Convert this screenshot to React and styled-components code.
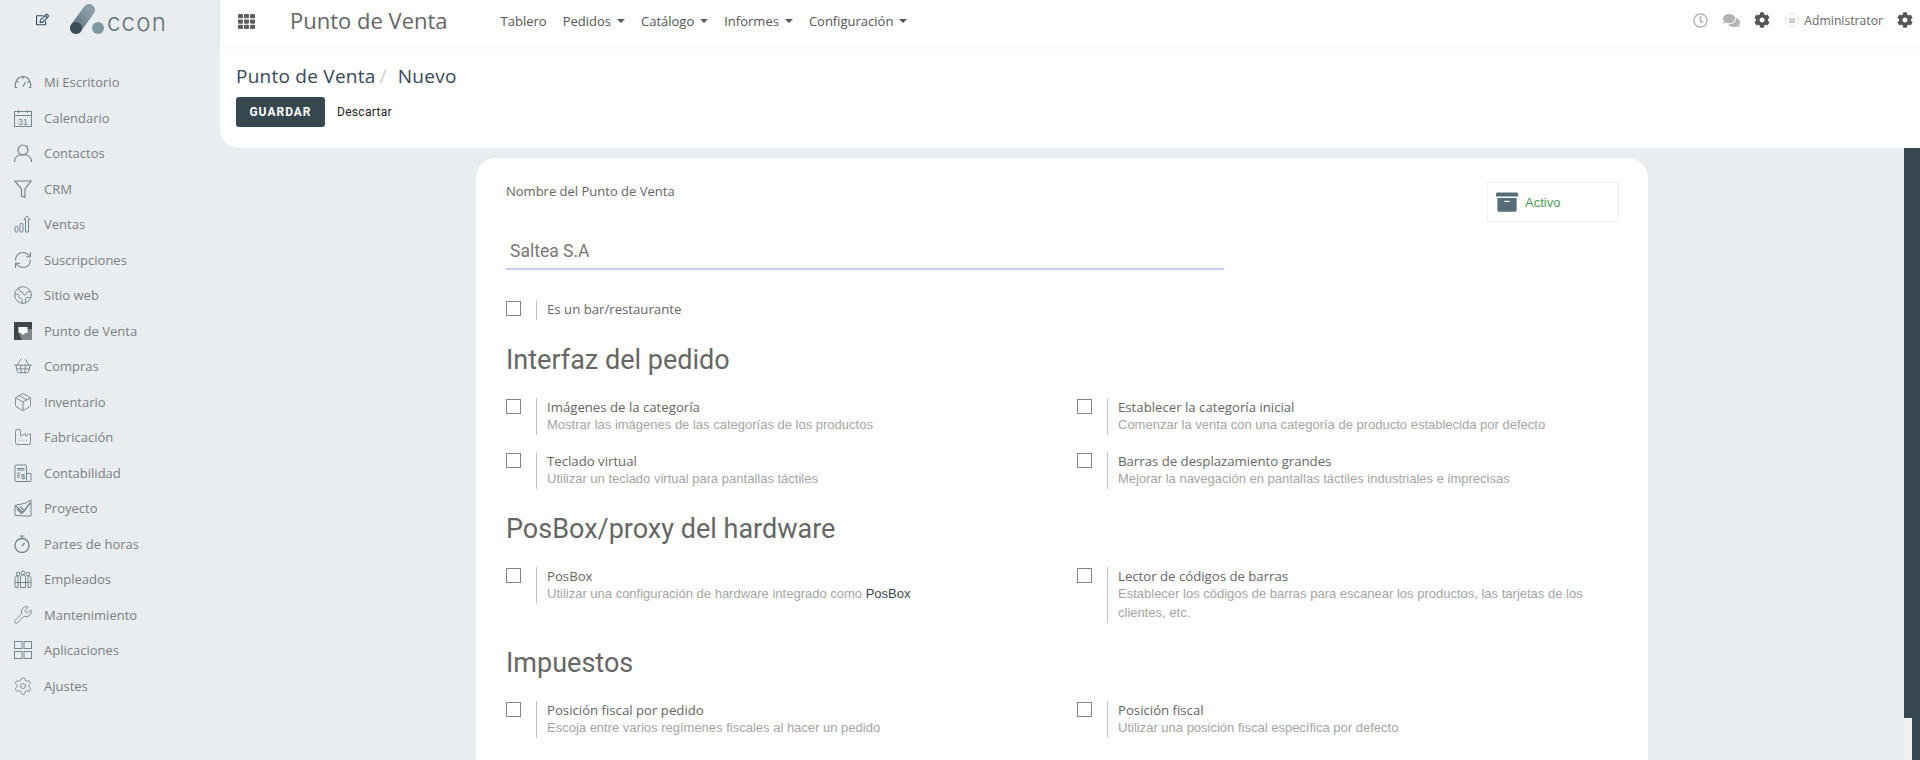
import React from "react";
import styled, { createGlobalStyle } from "styled-components";
import { FaArchive, FaCog, FaComments, FaRegClock, FaRegEdit, FaTh } from "react-icons/fa";
import { Earth, Factory, Package, RefreshCw, Settings, ShoppingBasket, Wrench } from "lucide-react";

const GlobalStyle = createGlobalStyle`
    html, body {
        margin: 0;
        padding: 0;
        height: 760px;
        overflow: hidden;
        background: #e9edf0;
        font-family: "Open Sans", "Liberation Sans", sans-serif;
    }
    * {
        box-sizing: border-box;
    }
`;

const Page = styled.div`
    display: flex;
    width: 1920px;
    height: 760px;
`;

const Sidebar = styled.aside`
    flex: 0 0 220px;
    background: #e9edf0;
`;

const Brand = styled.div`
    display: flex;
    height: 64.6px;
    padding: 13px 0 0 36px;
    color: #2f4a63;
`;

const LogoMark = styled.div`
    display: flex;
    align-items: flex-end;
    height: 36px;
    margin: -13px 0 0 19px;
`;

const LogoText = styled.span`
    margin-left: 1px;
    font-family: "Inter", "Open Sans", sans-serif;
    font-size: 24px;
    font-weight: 300;
    line-height: 26px;
    letter-spacing: 1.2px;
    color: #5f7079;
`;

const MenuList = styled.nav`
    display: flex;
    flex-direction: column;
`;

const MenuItem = styled.a`
    display: flex;
    align-items: center;
    height: 35.5px;
    padding-left: 14px;
    font-size: 13px;
    color: #7b7f82;
`;

const MenuIcon = styled.span`
    display: flex;
    flex: 0 0 30px;
    color: #748690;

    .lucide {
        margin: -1px 0 -1px -1px;
    }
`;

const Main = styled.div`
    display: flex;
    flex: 1;
    flex-direction: column;
    min-width: 0;
`;

const Header = styled.header`
    display: flex;
    flex: 0 0 46px;
    align-items: center;
    padding: 0 7px 4px 18px;
    background: #fff;
    box-shadow: 0 1px 6px rgba(0, 0, 0, .05);
    position: relative;
    z-index: 1;
`;

const AppTitle = styled.div`
    margin: -2px 53px 0 35px;
    font-size: 22px;
    color: #666;
`;

const TopNav = styled.nav`
    display: flex;
    gap: 16px;
`;

const TopLink = styled.a`
    display: flex;
    align-items: center;
    font-size: 13px;
    color: #555;

    ${p => p.$caret && `
        &:after {
            content: "";
            margin-left: 6px;
            border-top: 4px solid #555;
            border-left: 4px solid transparent;
            border-right: 4px solid transparent;
        }
    `}
`;

const TopRight = styled.div`
    display: flex;
    align-items: center;
    margin: -2px 0 0 auto;
`;

const TopIcon = styled.span`
    display: flex;
    margin-left: ${p => p.$gap || 0}px;
    color: ${p => p.color || "#555"};
`;

const Avatar = styled.span`
    display: flex;
    align-items: center;
    justify-content: center;
    width: 14px;
    height: 14px;
    margin: 0 5px 0 15px;
    border: 1px solid #e4e4e4;
    border-radius: 50%;

    &:after {
        content: "";
        width: 6px;
        height: 5px;
        background: #d0d0d0;
    }
`;

const UserName = styled.span`
    font-size: 12.2px;
    color: #666;
`;

const ControlPanel = styled.div`
    flex: 0 0 102px;
    padding: 18px 16px 0;
    background: #fff;
    border-bottom-left-radius: 20px;
`;

const Breadcrumb = styled.div`
    display: flex;
    height: 24px;
    align-items: center;
    font-family: "Open Sans", sans-serif;
    font-size: 19px;
    letter-spacing: .25px;
    color: #37475a;
`;

const Slash = styled.span`
    margin: 0 11px 0 4px;
    color: #ccc;
`;

const Actions = styled.div`
    display: flex;
    align-items: center;
    margin-top: 9px;
`;

const SaveButton = styled.button`
    width: 89px;
    height: 30px;
    padding: 0;
    border: 0;
    border-radius: 3px;
    background: #37474f;
    font-family: "Roboto", sans-serif;
    font-size: 12px;
    font-weight: 700;
    letter-spacing: 1px;
    color: #fff;
`;

const DiscardLink = styled.a`
    margin-left: 12px;
    font-family: "Roboto", sans-serif;
    font-size: 12px;
    letter-spacing: .3px;
    color: #222;
`;

const Body = styled.div`
    display: flex;
    flex: 1;
    min-height: 0;
`;

const Scroller = styled.div`
    flex: 1;
    min-width: 0;
    overflow: hidden;
`;

const Strip = styled.div`
    display: flex;
    flex: 0 0 16px;
    flex-direction: column;
    justify-content: flex-end;
    background: #37474f;
`;

const StripThumb = styled.div`
    width: 8px;
    height: 42px;
    background: #f1f1f1;
`;

const Card = styled.div`
    width: 1172px;
    margin: 10px auto 0;
    padding: 24px 29px 60px 30px;
    background: #fff;
    border-radius: 20px 20px 0 0;
    box-shadow: 0 0 14px rgba(0, 0, 0, .012);
`;

const FormHead = styled.div`
    display: flex;
    justify-content: space-between;
`;

const TitleBlock = styled.div`
    width: 718px;
`;

const FieldLabel = styled.label`
    display: block;
    font-size: 13px;
    line-height: 18px;
    color: #666;
`;

const NameInput = styled.div`
    height: 34px;
    margin-top: 36px;
    padding: 0 4px;
    border-bottom: 2px solid #c5d0ef;
    font-family: "Roboto", sans-serif;
    font-size: 17.5px;
    line-height: 30px;
    color: #777;
`;

const StatButton = styled.div`
    display: flex;
    align-items: center;
    width: 132px;
    height: 40px;
    padding-left: 8px;
    border: 1px solid #eef0f6;
    font-family: "Liberation Sans", sans-serif;
    font-size: 13px;
    color: #4f9a55;
`;

const StatIcon = styled.span`
    display: flex;
    margin-right: 7px;
    color: #566e7a;
`;

const Option = styled.div`
    display: flex;
    align-items: flex-start;
    margin-top: ${p => p.$top || 0}px;
`;

const CheckBox = styled.span`
    flex: 0 0 15px;
    height: 15px;
    margin-top: 1px;
    border: 1px solid #858585;
`;

const OptionText = styled.div`
    margin-left: 15px;
    padding: 0 0 1px 10px;
    min-height: ${p => p.$short ? 20 : 37}px;
    border-left: 1px solid #c4c4c4;
`;

const OptionLabel = styled.div`
    font-size: 13.2px;
    line-height: 18px;
    color: #666;
`;

const OptionHelp = styled.div`
    margin-top: -1px;
    font-family: "Liberation Sans", sans-serif;
    font-size: 13px;
    line-height: 19px;
    color: #a5a5a5;
`;

const HelpLink = styled.span`
    color: #37474f;
`;

const Heading = styled.h2`
    margin: 22px 0 20px;
    font-family: "Roboto", sans-serif;
    font-size: 27px;
    font-weight: 400;
    line-height: 36px;
    color: #666;
`;

const OptionGrid = styled.div`
    display: grid;
    grid-template-columns: 571px 519px;
    row-gap: 17px;
`;

const Icon = ({ children }) => (
    <svg width="18" height="18" viewBox="0 0 18 18" fill="none" stroke="currentColor" strokeWidth="1">
        {children}
    </svg>
);

const GaugeIcon = () => (
    <Icon>
        <path d="M1.5 14.5C.2 8 4.5 3.500 9 3.500s8.800 4.500 7.500 11" strokeWidth="1.200" />
        <path d="M.8 14.500h2.500M14.700 14.500h2.500M3 8.500l1.500 1M15 8.500l-1.500 1M9 4v2M9 13.500l2.500-4.500" strokeWidth="1.200" />
    </Icon>
);

const CalendarIcon = () => (
    <Icon>
        <rect x=".5" y="2.500" width="17" height="15" />
        <path d="M.5 6.500h17M4.500 1v3M13.500 1v3" />
        <text x="9" y="15.800" textAnchor="middle" fontSize="9" fontFamily="Liberation Sans" fill="currentColor" stroke="none">31</text>
    </Icon>
);

const UserIcon = () => (
    <Icon>
        <circle cx="9" cy="6" r="5" strokeWidth="1.200" />
        <path d="M.5 18c0-5 3.500-7.500 8.500-7.500s8.500 2.500 8.500 7.500" strokeWidth="1.200" />
    </Icon>
);

const FunnelIcon = () => (
    <Icon>
        <path d="M.8 1h16.400l-6.200 8v8.500l-3.500-1.500V9z" strokeWidth="1.200" />
    </Icon>
);

const BarsIcon = () => (
    <Icon>
        <rect x="1" y="11.500" width="3" height="5.500" rx=".8" />
        <rect x="6" y="8.500" width="3" height="8.500" rx=".8" />
        <path d="M11.500 17V4.500H10L13 1l3 3.500h-1.500V17z" />
    </Icon>
);

const PosIcon = () => (
    <svg width="18" height="18" viewBox="0 0 18 18">
        <rect width="18" height="18" fill="#3f4649" />
        <path d="M18 18H8l-3-6 9-5h4z" fill="#7e8487" />
        <rect x="4.500" y="5" width="9" height="6" fill="#fff" />
        <rect x="7.500" y="11" width="3" height="1.500" fill="#fff" />
    </svg>
);

const LedgerIcon = () => (
    <Icon>
        <path d="M12.500 16.500V2a1 1 0 0 0-1-1H2a1 1 0 0 0-1 1v14.500a1 1 0 0 0 1 1h14a1 1 0 0 0 1-1V9.500h-4.500" />
        <path d="M3 4.500h7.500M3 6h7.500M3 9h3M3 11h3M3 13h3" />
        <text x="9" y="14.500" textAnchor="middle" fontSize="7.500" fontWeight="700" fontFamily="Liberation Sans" fill="currentColor" stroke="none">$</text>
    </Icon>
);

const ProjectIcon = () => (
    <Icon>
        <path d="M1 6.500v10l12 .5h4V1l-5 3z" />
        <path d="M1 6.500l8 7 7.500-10M3 10l5 5M6 8l4 3" strokeWidth="1.300" />
    </Icon>
);

const TimerIcon = () => (
    <Icon>
        <circle cx="8" cy="10.500" r="7" strokeWidth="1.400" />
        <path d="M5.500 1h5M8 1v2.500M8 11l2.500-3" strokeWidth="1.200" />
    </Icon>
);

const StaffIcon = () => (
    <Icon>
        <circle cx="4" cy="4" r="1.800" />
        <circle cx="9" cy="2.800" r="1.800" />
        <circle cx="14" cy="4" r="1.800" />
        <path d="M1 8.500c0-2 1-2.500 3-2.500v11.500H2a1 1 0 0 1-1-1zM6.500 17.500V7c0-1.500 1-2 2.500-2s2.500.5 2.500 2v10.500zM17 8.500c0-2-1-2.500-3-2.500v11.500h2a1 1 0 0 0 1-1zM1 12.500h16" />
    </Icon>
);

const AppsIcon = () => (
    <Icon>
        <rect x=".5" y=".5" width="7.500" height="7" />
        <rect x="10" y=".5" width="7.500" height="7" />
        <rect x=".5" y="10.500" width="7.500" height="7" />
        <rect x="10" y="10.500" width="7.500" height="7" />
    </Icon>
);

const line = { size: 20, strokeWidth: 1.1 };

const menu = [
    ["Mi Escritorio", <GaugeIcon />],
    ["Calendario", <CalendarIcon />],
    ["Contactos", <UserIcon />],
    ["CRM", <FunnelIcon />],
    ["Ventas", <BarsIcon />],
    ["Suscripciones", <RefreshCw {...line} strokeWidth={1.3} />],
    ["Sitio web", <Earth {...line} />],
    ["Punto de Venta", <PosIcon />],
    ["Compras", <ShoppingBasket {...line} />],
    ["Inventario", <Package {...line} />],
    ["Fabricación", <Factory {...line} />],
    ["Contabilidad", <LedgerIcon />],
    ["Proyecto", <ProjectIcon />],
    ["Partes de horas", <TimerIcon />],
    ["Empleados", <StaffIcon />],
    ["Mantenimiento", <Wrench {...line} />],
    ["Aplicaciones", <AppsIcon />],
    ["Ajustes", <Settings {...line} />],
];

const topLinks = [
    ["Tablero", false],
    ["Pedidos", true],
    ["Catálogo", true],
    ["Informes", true],
    ["Configuración", true],
];

const Setting = ({ label, help, top }) => (
    <Option $top={top}>
        <CheckBox />
        <OptionText $short={!help}>
            <OptionLabel>{label}</OptionLabel>
            {help && <OptionHelp>{help}</OptionHelp>}
        </OptionText>
    </Option>
);

const Logo = () => (
    <LogoMark>
        <svg width="38" height="36" viewBox="0 0 38 36">
            <defs>
                <linearGradient id="pill" x1="0" y1="1" x2="1" y2="0">
                    <stop offset="0" stopColor="#5e7480" />
                    <stop offset="1" stopColor="#8ba0ab" />
                </linearGradient>
            </defs>
            <line x1="8" y1="28" x2="21" y2="10" stroke="url(#pill)" strokeWidth="12" strokeLinecap="round" />
            <circle cx="8" cy="28" r="6" fill="#3c4e58" />
            <circle cx="30" cy="28" r="6" fill="#7f98a3" />
        </svg>
        <LogoText>ccon</LogoText>
    </LogoMark>
);

export default function App() {
    return (
        <Page>
            <GlobalStyle />
            <Sidebar>
                <Brand>
                    <FaRegEdit size={13} />
                    <Logo />
                </Brand>
                <MenuList>
                    {menu.map(([name, icon]) => (
                        <MenuItem key={name}>
                            <MenuIcon>{icon}</MenuIcon>
                            {name}
                        </MenuItem>
                    ))}
                </MenuList>
            </Sidebar>
            <Main>
                <Header>
                    <FaTh size={17} color="#5f5f5f" />
                    <AppTitle>Punto de Venta</AppTitle>
                    <TopNav>
                        {topLinks.map(([name, caret]) => (
                            <TopLink key={name} $caret={caret}>{name}</TopLink>
                        ))}
                    </TopNav>
                    <TopRight>
                        <TopIcon color="#b4b4b4"><FaRegClock size={15} /></TopIcon>
                        <TopIcon color="#b4b4b4" $gap={15}><FaComments size={17} /></TopIcon>
                        <TopIcon $gap={14}><FaCog size={16} /></TopIcon>
                        <Avatar />
                        <UserName>Administrator</UserName>
                        <TopIcon $gap={14}><FaCog size={16} /></TopIcon>
                    </TopRight>
                </Header>
                <ControlPanel>
                    <Breadcrumb>
                        Punto de Venta<Slash>/</Slash>Nuevo
                    </Breadcrumb>
                    <Actions>
                        <SaveButton>GUARDAR</SaveButton>
                        <DiscardLink>Descartar</DiscardLink>
                    </Actions>
                </ControlPanel>
                <Body>
                    <Scroller>
                        <Card>
                            <FormHead>
                                <TitleBlock>
                                    <FieldLabel>Nombre del Punto de Venta</FieldLabel>
                                    <NameInput>Saltea S.A</NameInput>
                                </TitleBlock>
                                <StatButton>
                                    <StatIcon><FaArchive size={22} /></StatIcon>
                                    Activo
                                </StatButton>
                            </FormHead>
                            <Setting label="Es un bar/restaurante" top={30} />

                            <Heading>Interfaz del pedido</Heading>
                            <OptionGrid>
                                <Setting label="Imágenes de la categoría" help="Mostrar las imágenes de las categorías de los productos" />
                                <Setting label="Establecer la categoría inicial" help="Comenzar la venta con una categoría de producto establecida por defecto" />
                                <Setting label="Teclado virtual" help="Utilizar un teclado virtual para pantallas táctiles" />
                                <Setting label="Barras de desplazamiento grandes" help="Mejorar la navegación en pantallas táctiles industriales e imprecisas" />
                            </OptionGrid>

                            <Heading>PosBox/proxy del hardware</Heading>
                            <OptionGrid>
                                <Setting label="PosBox" help={<>Utilizar una configuración de hardware integrado como <HelpLink>PosBox</HelpLink></>} />
                                <Setting label="Lector de códigos de barras" help="Establecer los códigos de barras para escanear los productos, las tarjetas de los clientes, etc." />
                            </OptionGrid>

                            <Heading>Impuestos</Heading>
                            <OptionGrid>
                                <Setting label="Posición fiscal por pedido" help="Escoja entre varios regímenes fiscales al hacer un pedido" />
                                <Setting label="Posición fiscal" help="Utilizar una posición fiscal específica por defecto" />
                            </OptionGrid>
                        </Card>
                    </Scroller>
                    <Strip>
                        <StripThumb />
                    </Strip>
                </Body>
            </Main>
        </Page>
    );
}
